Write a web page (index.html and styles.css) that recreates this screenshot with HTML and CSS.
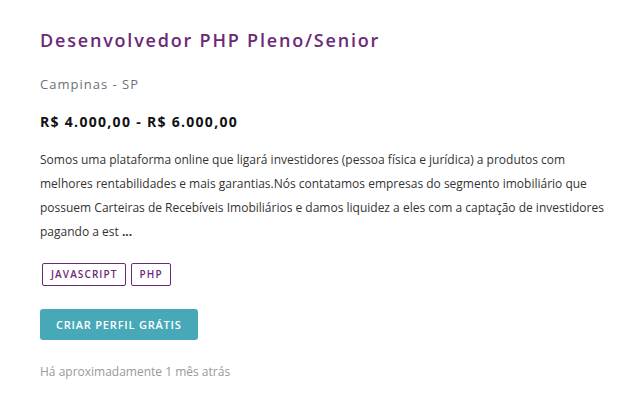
FILE: index.html
```html
<!DOCTYPE html>
<html lang="pt-BR">
<head>
<meta charset="utf-8">
<link rel="stylesheet" href="styles.css">
</head>
<body>
<article class="job">
  <h1 class="job-title">Desenvolvedor PHP Pleno/Senior</h1>
  <p class="job-location">Campinas - SP</p>
  <p class="job-salary">R$ 4.000,00 - R$ 6.000,00</p>
  <p class="job-desc">Somos uma plataforma online que ligará investidores (pessoa física e jurídica) a produtos com melhores rentabilidades e mais garantias.Nós contatamos empresas do segmento imobiliário que possuem Carteiras de Recebíveis Imobiliários e damos liquidez a eles com a captação de investidores pagando a est <b>...</b></p>
  <div class="job-tags">
    <span class="tag">JAVASCRIPT</span>
    <span class="tag">PHP</span>
  </div>
  <div class="job-actions">
    <a class="btn" href="#">CRIAR PERFIL GRÁTIS</a>
  </div>
  <p class="job-time">Há aproximadamente 1 mês atrás</p>
</article>
</body>
</html>
```
FILE: styles.css
```css
html, body {
  margin: 0;
  padding: 0;
  background: #fff;
}
body {
  font-family: "Open Sans", "Liberation Sans", sans-serif;
  color: #333;
}
.job {
  display: block;
  padding: 28px 0 0 40px;
}
.job-title {
  margin: 0;
  font-size: 18px;
  font-weight: 600;
  letter-spacing: 1.8px;
  color: #6b2a75;
  line-height: 24px;
}
.job-location {
  margin: 23px 0 0;
  font-size: 13px;
  letter-spacing: 1px;
  color: #6c7177;
  line-height: 18px;
}
.job-salary {
  margin: 20px 0 0;
  font-size: 14px;
  font-weight: 700;
  letter-spacing: 1.3px;
  color: #111;
  line-height: 18px;
}
.job-desc {
  width: 572px;
  margin: 17px 0 0;
  font-size: 12px;
  line-height: 24px;
  color: #333;
  text-wrap: wrap;
}
.job-desc b { font-weight: 700; }
.job-tags {
  display: flex;
  gap: 5px;
  margin: 19px 0 0 2px;
}
.tag {
  border: 1px solid #6b2a75;
  border-radius: 2px;
  color: #6b2a75;
  font-size: 10px;
  font-weight: 600;
  letter-spacing: 1.1px;
  padding: 0 7px 0 8px;
  line-height: 21px;
}
.job-actions {
  display: flex;
  margin-top: 23px;
}
.btn {
  display: inline-block;
  background: #47a9b8;
  color: #fff;
  text-decoration: none;
  font-size: 11px;
  font-weight: 600;
  letter-spacing: 0.8px;
  padding: 0 16px;
  line-height: 31px;
  border-radius: 3px;
}
.job-time {
  margin: 23px 0 0;
  font-size: 12px;
  color: #999;
  line-height: 18px;
}
```
